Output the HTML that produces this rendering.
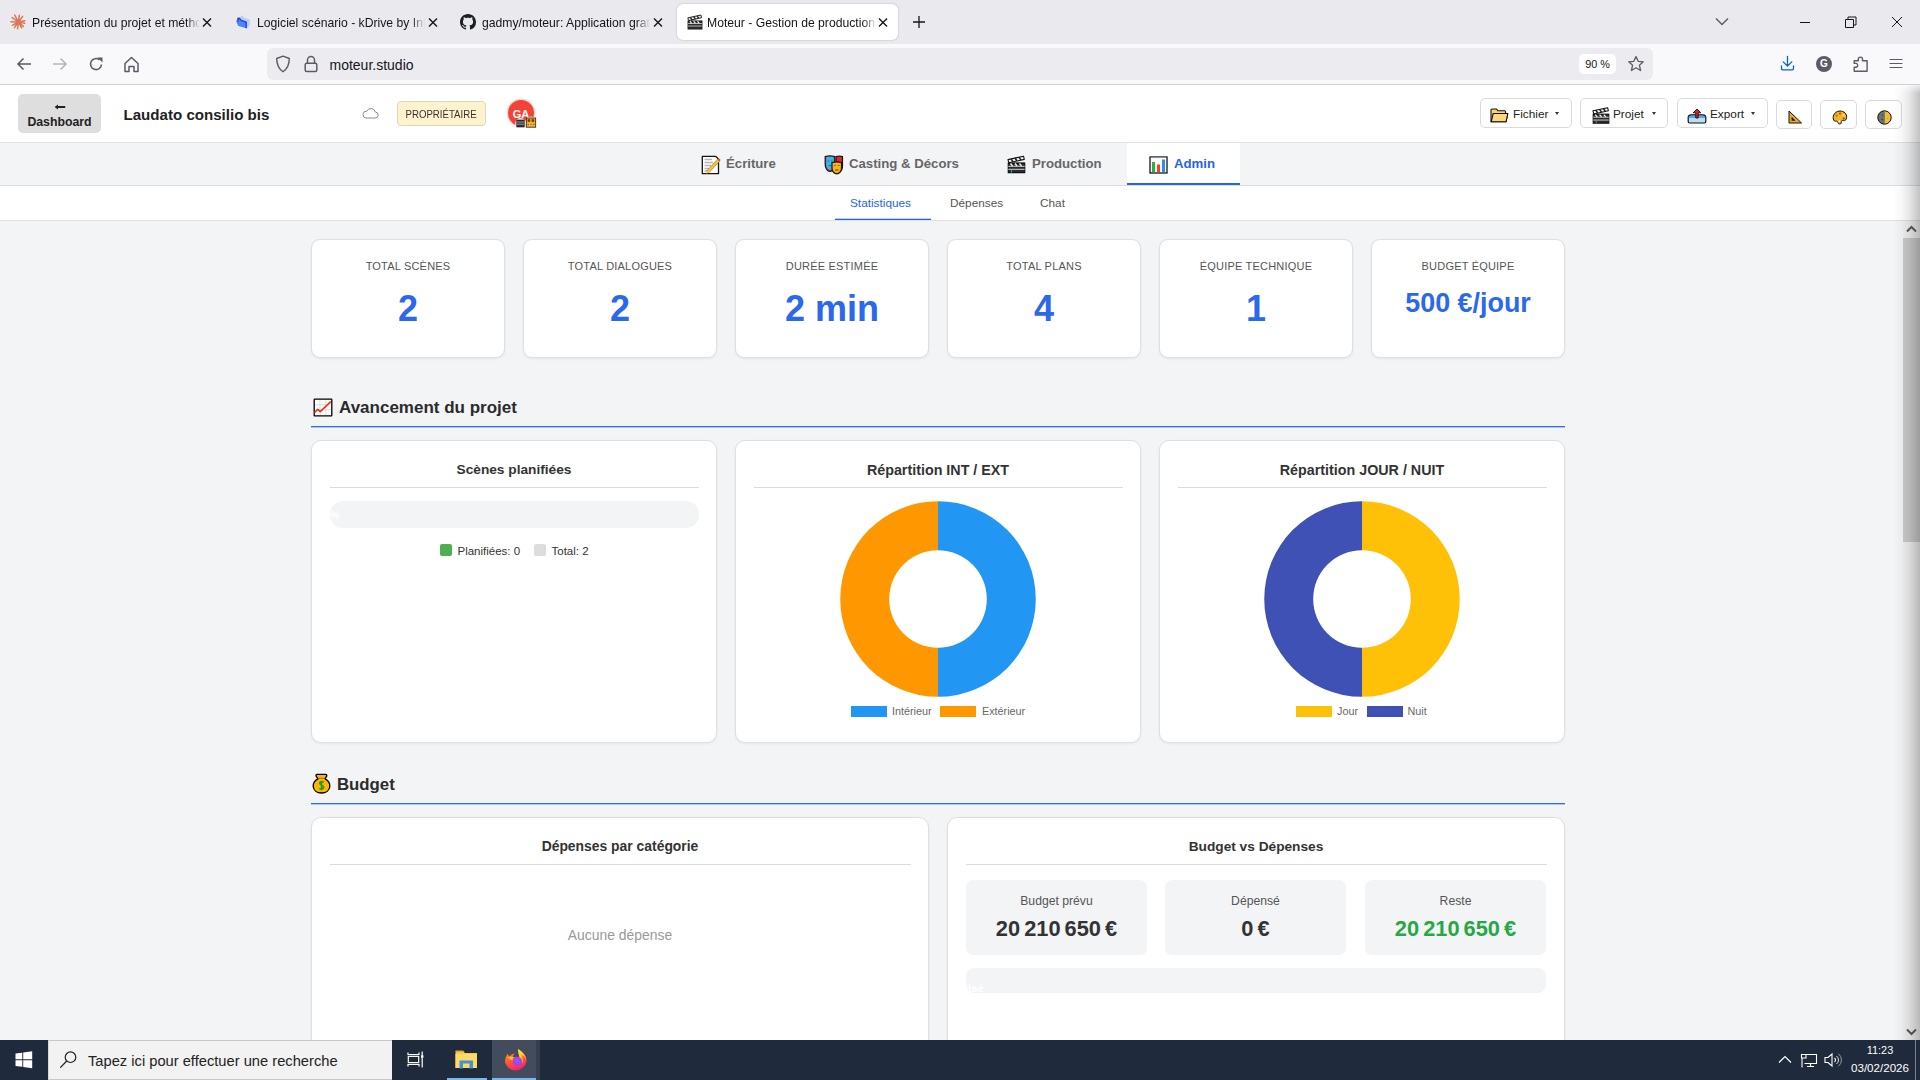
<!DOCTYPE html>
<html><head><meta charset="utf-8">
<style>
*{box-sizing:border-box}
html,body{margin:0;padding:0;width:1920px;height:1080px;overflow:hidden;position:relative;font-family:"Liberation Sans",sans-serif;background:#f3f4f6;color:#222}
.a{position:absolute}
svg{display:block}
/* browser chrome */
#tabs{left:0;top:0;width:1920px;height:44px;background:#eaeaee}
.tab{top:4px;height:36px;font-size:13px;color:#15141a;white-space:nowrap}
.tab .t{position:absolute;top:10px;overflow:hidden;}
.tabt{top:15px;height:18px;font-size:12.2px;line-height:16px;color:#15141a;white-space:nowrap;overflow:hidden;-webkit-mask-image:linear-gradient(to right,#000 calc(100% - 14px),transparent 100%)}
.fade{position:absolute;top:0;height:36px;width:14px}
#nav{left:0;top:44px;width:1920px;height:41px;background:#f9f9fb;border-bottom:1px solid #cfcfd8}
#url{left:267px;top:48px;width:1386px;height:32px;background:#ececf0;border-radius:6px}
/* page */
#hdr{left:0;top:85px;width:1920px;height:58px;background:#fff;border-bottom:1px solid #e0e0e0}
#mtabs{left:0;top:143px;width:1920px;height:43px;background:#f3f4f6;border-bottom:1px solid #dcdcdc}
#stabs{left:0;top:186px;width:1920px;height:35px;background:#fff;border-bottom:1px solid #e0e0e0}
.mt{top:0;height:42px;font-size:15px;font-weight:bold;color:#555}
.card{background:#fff;border:1px solid #dedfe1;border-radius:9px;box-shadow:0 1px 3px rgba(0,0,0,0.06)}
.lbl{font-size:11px;line-height:13px;letter-spacing:0.2px;color:#555;text-align:center;width:100%;top:20px}
.val{font-size:36px;line-height:40px;font-weight:bold;color:#2b68ee;text-align:center;width:100%;top:49px}
.sec{font-size:19px;font-weight:bold;color:#2b2b2b}
.secline{height:2px;background:linear-gradient(#2f6bed 0,#2f6bed 1px,rgba(47,107,237,0.35) 1px)}
.ctitle{font-size:13.7px;line-height:16px;font-weight:bold;color:#333;text-align:center;width:100%;top:21px}
.csep{height:1px;background:#dcdcdc;top:46px}
.btn{top:13px;height:30px;background:#fff;border:1px solid #dadada;border-radius:5px}
.btn .ico{position:absolute;top:5px;font-size:15px;line-height:18px}
.btn .bt{position:absolute;top:8px;font-size:11.8px;line-height:14px;color:#222}
.btn .car{position:absolute;top:13px;width:0;height:0;border-left:2.5px solid transparent;border-right:2.5px solid transparent;border-top:3.5px solid #333}
.btn2{top:15px;width:36px;height:29px;background:#fff;border:1px solid #dadada;border-radius:5px}
.btn2 .ico2{position:absolute;left:8px;top:6px;font-size:15px;line-height:18px}
.mti{top:12px;font-size:16px;line-height:19px}
.mtt{top:13px;font-size:13.2px;line-height:15px;font-weight:bold;color:#666}
.stt{top:9.5px;font-size:11.8px;line-height:14px;color:#555}
.card2{background:#fff;border:1px solid #dedfe1;border-radius:10px;box-shadow:0 1px 3px rgba(0,0,0,0.06)}
.lg{font-size:11.5px;line-height:13px;color:#333}
.cl{font-size:10.8px;line-height:13px;color:#666}
.bx{top:61.5px;width:181px;height:75px;background:#f3f4f6;border-radius:7px}
.bl{top:14px;width:100%;text-align:center;font-size:12.2px;line-height:14px;color:#555}
.bv{top:37px;width:100%;text-align:center;font-size:21.8px;line-height:24px;font-weight:bold;color:#333;word-spacing:-2px}
#task{left:0;top:1040px;width:1920px;height:40px;background:#1f2a3c}
</style></head><body>

<!-- TAB STRIP -->
<div id="tabs" class="a">
 <!-- tab1 -->
 <svg class="a" style="left:10px;top:14px" width="16" height="16" viewBox="0 0 16 16"><path d="M8.4 8.0L4.7 1.1M8.4 8.0L9.3 1.3M8.4 8.0L12.7 2.4M8.4 8.0L2.2 3.6M8.4 8.0L14.9 6.7M8.4 8.0L0.9 7.8M8.4 8.0L14.7 9.3M8.4 8.0L2.4 11.3M8.4 8.0L13.3 12.4M8.4 8.0L4.4 13.6M8.4 8.0L11.6 13.8M8.4 8.0L7.6 14.7" stroke="#d97757" stroke-width="1.5" stroke-linecap="round"/><circle cx="8.4" cy="8.0" r="2.2" fill="#d97757"/></svg>
 <div class="a tabt" style="left:32px;width:168px">Présentation du projet et méthodologie</div>
 <svg class="a" style="left:202px;top:18px" width="10" height="9" viewBox="0 0 10 9"><path d="M1 0.5L9 8.5M9 0.5L1 8.5" stroke="#15141a" stroke-width="1.4"/></svg>
 <!-- tab2 -->
 <svg class="a" style="left:236px;top:15px" width="15" height="14" viewBox="0 0 15 14"><path d="M4.0 2.3L6.4 0.3L8.0 2.8L13.8 4.6L13.8 10.6L10.7 13.2L4.0 11.0Z" fill="#b9cdfb"/><path d="M0.2 6.3L2.0 3.0L3.3 3.0L5.3 5.4L10.2 7.2L10.7 13.2L2.2 11.0Z" fill="#4d86f7"/><path d="M2 6.5V3.2H3.3L5.3 5.4L10.2 7.2V13.2" fill="none" stroke="#1a3cf0" stroke-width="1.3" stroke-linejoin="round"/></svg>
 <div class="a tabt" style="left:257px;width:168px">Logiciel scénario - kDrive by Infomaniak</div>
 <svg class="a" style="left:428px;top:18px" width="10" height="9" viewBox="0 0 10 9"><path d="M1 0.5L9 8.5M9 0.5L1 8.5" stroke="#15141a" stroke-width="1.4"/></svg>
 <!-- tab3 -->
 <svg class="a" style="left:460px;top:14px" width="16" height="16" viewBox="0 0 16 16"><path fill="#1b1f24" d="M8 0C3.58 0 0 3.58 0 8c0 3.54 2.29 6.53 5.47 7.59.4.07.55-.17.55-.38 0-.19-.01-.82-.01-1.49-2.01.37-2.53-.49-2.69-.94-.09-.23-.48-.94-.82-1.13-.28-.15-.68-.52-.01-.53.63-.01 1.08.58 1.23.82.72 1.21 1.87.87 2.33.66.07-.52.28-.87.51-1.07-1.780-.2-3.640-.89-3.640-3.950 0-.87.31-1.59.82-2.15-.08-.2-.36-1.02.08-2.12 0 0 .67-.21 2.2.82.64-.18 1.320-.27 2-.27.68 0 1.36.09 2 .27 1.53-1.040 2.2-.82 2.2-.82.44 1.100.16 1.920.08 2.120.51.56.82 1.270.82 2.150 0 3.07-1.870 3.750-3.650 3.950.29.25.54.73.54 1.480 0 1.070-.01 1.930-.01 2.200 0 .21.15.46.55.38A8.013 8.013 0 0016 8c0-4.42-3.58-8-8-8z"/></svg>
 <div class="a tabt" style="left:482px;width:168px">gadmy/moteur: Application gratuite</div>
 <svg class="a" style="left:653px;top:18px" width="10" height="9" viewBox="0 0 10 9"><path d="M1 0.5L9 8.5M9 0.5L1 8.5" stroke="#15141a" stroke-width="1.4"/></svg>
 <!-- tab4 active -->
 <div class="a" style="left:677px;top:4px;width:221px;height:36px;background:#fff;border-radius:6px;box-shadow:0 0 2px rgba(0,0,0,0.25)"></div>
 <svg class="a" style="left:687px;top:14px" width="16" height="16" viewBox="0 0 19 19"><path d="M1.3 8.2H17.7V17.7H1.3Z" fill="#2b2b2b" stroke="#111" stroke-width="1.2"/><path d="M1.3 11.3H17.7M1.3 14.3H17.7" stroke="#e8e8e8" stroke-width="0.9"/><path d="M1 4.6L16.5 1.2L17.3 4.4L1.8 7.8Z" fill="#f2f2f2" stroke="#111" stroke-width="1.1" stroke-linejoin="round"/><path d="M4 3.9L6 6.9M8 3L10 6M12 2.1L14 5.1" stroke="#222" stroke-width="1.6"/><path d="M3.5 8.5L5.5 11M8 8.5L10 11M12.5 8.5L14.5 11" stroke="#f2f2f2" stroke-width="1.4"/></svg>
 <div class="a tabt" style="left:707px;width:170px">Moteur - Gestion de production</div>
 <svg class="a" style="left:878px;top:18px" width="10" height="9" viewBox="0 0 10 9"><path d="M1 0.5L9 8.5M9 0.5L1 8.5" stroke="#15141a" stroke-width="1.4"/></svg>
 <!-- plus -->
 <svg class="a" style="left:912px;top:15px" width="14" height="14" viewBox="0 0 14 14"><path d="M7 1V13M1 7H13" stroke="#15141a" stroke-width="1.3"/></svg>
 <!-- right controls -->
 <svg class="a" style="left:1715px;top:17px" width="14" height="9" viewBox="0 0 14 9"><path d="M1 1.5L7 7.5L13 1.5" fill="none" stroke="#5b5b66" stroke-width="1.4"/></svg>
 <svg class="a" style="left:1799px;top:16px" width="12" height="12" viewBox="0 0 12 12"><path d="M1 6.5H11" stroke="#15141a" stroke-width="1"/></svg>
 <svg class="a" style="left:1845px;top:16px" width="12" height="12" viewBox="0 0 12 12"><path d="M0.5 3.5H8.5V11.5H0.5Z M3 3.5V1H11V9H8.5" fill="none" stroke="#15141a" stroke-width="1"/></svg>
 <svg class="a" style="left:1891px;top:16px" width="12" height="12" viewBox="0 0 12 12"><path d="M1 1L11 11M11 1L1 11" stroke="#15141a" stroke-width="1"/></svg>
</div>

<!-- NAV BAR -->
<div id="nav" class="a">
 <svg class="a" style="left:16px;top:13px" width="16" height="14" viewBox="0 0 16 14"><path d="M15 7H2M7.5 1.5L2 7L7.5 12.5" fill="none" stroke="#5b5b66" stroke-width="1.5"/></svg>
 <svg class="a" style="left:52px;top:13px" width="16" height="14" viewBox="0 0 16 14"><path d="M1 7H14M8.5 1.5L14 7L8.5 12.5" fill="none" stroke="#b4b4bb" stroke-width="1.5"/></svg>
 <svg class="a" style="left:88px;top:12px" width="16" height="16" viewBox="0 0 16 16"><path d="M13.5 8.5A5.5 5.5 0 1 1 11.5 3.8" fill="none" stroke="#5b5b66" stroke-width="1.6"/><path d="M9.5 1.5H14.5V6.5Z" fill="#5b5b66"/></svg>
 <svg class="a" style="left:123px;top:12px" width="17" height="17" viewBox="0 0 17 17"><path d="M2 7.5L8.5 1.5L15 7.5V15.5H11V10.5H6V15.5H2Z" fill="none" stroke="#5b5b66" stroke-width="1.5" stroke-linejoin="round"/></svg>
</div>
<div id="url" class="a">
 <svg class="a" style="left:8px;top:7px" width="16" height="18" viewBox="0 0 16 18"><path d="M8 1.2L14.3 3.5C14.3 10 12 14 8 16.8C4 14 1.7 10 1.7 3.5Z" fill="none" stroke="#5b5b66" stroke-width="1.4" stroke-linejoin="round"/></svg>
 <svg class="a" style="left:37px;top:7px" width="14" height="18" viewBox="0 0 14 18"><path d="M3.5 8V5A3.5 3.5 0 0 1 10.5 5V8" fill="none" stroke="#5b5b66" stroke-width="1.5"/><rect x="1.2" y="8.2" width="11.6" height="8.3" rx="1.5" fill="none" stroke="#5b5b66" stroke-width="1.5"/></svg>
 <div class="a" style="left:62.5px;top:9px;font-size:14px;line-height:16px;color:#15141a">moteur.studio</div>
 <div class="a" style="left:1312px;top:6px;width:37px;height:20px;background:#fff;border-radius:5px;font-size:10.8px;line-height:21px;text-align:center;color:#15141a">90 %</div>
 <svg class="a" style="left:1360px;top:7px" width="18" height="18" viewBox="0 0 18 18"><path d="M9 1.5L11.2 6.3L16.3 6.8L12.4 10.2L13.6 15.5L9 12.8L4.4 15.5L5.6 10.2L1.7 6.8L6.8 6.3Z" fill="none" stroke="#5b5b66" stroke-width="1.3" stroke-linejoin="round"/></svg>
</div>
 <svg class="a" style="left:1779px;top:55px" width="17" height="17" viewBox="0 0 17 17"><path d="M8.5 1.3V11M4.2 6.9L8.5 11.1L12.8 6.9M2.5 10.8V13.6A1.2 1.2 0 0 0 3.7 14.8H13.3A1.2 1.2 0 0 0 14.5 13.6V10.8" fill="none" stroke="#0061e0" stroke-width="1.3" stroke-linecap="round" stroke-linejoin="round"/></svg>
 <div class="a" style="left:1816px;top:56px;width:16px;height:16px;border-radius:50%;background:#5b5b66;color:#fff;font-size:10px;font-weight:bold;line-height:16px;text-align:center">G</div>
 <svg class="a" style="left:1853px;top:55px" width="16" height="18" viewBox="0 0 16 18"><path d="M1.2 5.7H5.3V4.2A2.1 2.1 0 0 1 9.5 4.2V5.7H14.1V16.3H1.2V12.3H3.2A2 2 0 0 0 3.2 8.4H1.2Z" fill="none" stroke="#5b5b66" stroke-width="1.4" stroke-linejoin="round"/></svg>
 <svg class="a" style="left:1889px;top:57px" width="14" height="13" viewBox="0 0 14 13"><path d="M1 2.5H13M1 6.5H13M1 10.5H13" stroke="#5b5b66" stroke-width="1.2" stroke-linecap="round"/></svg>

<!-- PAGE HEADER -->
<div id="hdr" class="a">
 <div class="a" style="left:18px;top:9px;width:83px;height:39px;background:#dedede;border-radius:5px"></div>
 <svg class="a" style="left:54px;top:19px" width="12" height="6" viewBox="0 0 12 6"><path d="M0.6 3L4 0.4V2H11.2V4H4V5.6Z" fill="#222"/></svg>
 <div class="a" style="left:18px;top:29.5px;width:83px;text-align:center;font-size:12.3px;line-height:14px;font-weight:bold;color:#222">Dashboard</div>
 <div class="a" style="left:123.5px;top:21px;font-size:15.1px;line-height:18px;font-weight:bold;color:#222">Laudato consilio bis</div>
 <svg class="a" style="left:362px;top:22px" width="17" height="12" viewBox="0 0 17 12"><path d="M4 11H13A3 3 0 0 0 13.3 5A4.5 4.5 0 0 0 4.8 4.2A3.4 3.4 0 0 0 4 11Z" fill="none" stroke="#8a8a8a" stroke-width="1"/></svg>
 <div class="a" style="left:397px;top:16px;width:89px;height:25px;background:#fff3cd;border:1px solid #ddd6bf;border-radius:4px;line-height:22px;text-align:center;color:#333"><span style="display:inline-block;font-size:10.6px;transform:scaleX(0.91);transform-origin:center">PROPRIÉTAIRE</span></div>
 <div class="a" style="left:508px;top:15px;width:26px;height:26px;border-radius:50%;background:#f44336;box-shadow:0 0 2px 1px rgba(244,67,54,0.3)"></div>
 <div class="a" style="left:508px;top:22.5px;width:26px;text-align:center;font-size:11px;line-height:13px;font-weight:bold;color:#fff">GA</div>
 <svg class="a" style="left:514px;top:30px" width="24" height="14" viewBox="0 0 24 14"><circle cx="6.5" cy="8.2" r="5.2" fill="#fff" opacity="0.9"/><rect x="2.8" y="5" width="7.4" height="7" fill="#333" stroke="#111" stroke-width="0.6"/><path d="M3 7H10M3 9.2H10" stroke="#ddd" stroke-width="0.6"/><circle cx="17" cy="7.5" r="6" fill="#fff" opacity="0.85"/><rect x="12.3" y="3" width="9.4" height="9.2" fill="#f5b21e" stroke="#222" stroke-width="0.8"/><rect x="13.6" y="4.2" width="2.6" height="2.6" fill="#6b3a10"/><rect x="17.6" y="4.2" width="2.6" height="2.6" fill="#6b3a10"/><circle cx="14.3" cy="9.4" r="0.7" fill="#e0207a"/><circle cx="17" cy="9.4" r="0.7" fill="#20a0a0"/><circle cx="19.7" cy="9.4" r="0.7" fill="#e0207a"/></svg>
 

 <div class="a btn" style="left:1480px;width:92px"><svg class="a" style="left:9px;top:9px" width="19" height="15" viewBox="0 0 19 15"><path d="M1 2.2Q1 1 2.2 1H6.5L8 2.8H14.5Q15.6 2.8 15.6 4V5.5H17.8L16 13.8H1Z" fill="#fcd06a" stroke="#111" stroke-width="1.1" stroke-linejoin="round"/><path d="M3.2 5.5H17.8L16 13.8H1.2Z" fill="#fdd77e" stroke="#111" stroke-width="1.1" stroke-linejoin="round"/></svg><span class="bt" style="left:32px">Fichier</span><span class="car" style="left:74px"></span></div>
 <div class="a btn" style="left:1580px;width:88px"><svg class="a" style="left:10.5px;top:6.5px" width="18" height="19" viewBox="0 0 19 19"><path d="M1.3 8.2H17.7V17.7H1.3Z" fill="#2b2b2b" stroke="#111" stroke-width="1.2"/><path d="M1.3 11.3H17.7M1.3 14.3H17.7" stroke="#e8e8e8" stroke-width="0.9"/><path d="M4.5 14.3V17.7" stroke="#48a0e0" stroke-width="0.9"/><path d="M1 4.6L16.5 1.2L17.3 4.4L1.8 7.8Z" fill="#f2f2f2" stroke="#111" stroke-width="1.1" stroke-linejoin="round"/><path d="M4 3.9L6 6.9M8 3L10 6M12 2.1L14 5.1" stroke="#222" stroke-width="1.6"/><path d="M1.5 8.2H17.5" stroke="#111" stroke-width="0.8"/><path d="M3.5 8.5L5.5 11M8 8.5L10 11M12.5 8.5L14.5 11" stroke="#f2f2f2" stroke-width="1.4"/></svg><span class="bt" style="left:32px">Projet</span><span class="car" style="left:71px"></span></div>
 <div class="a btn" style="left:1677px;width:91px"><svg class="a" style="left:8.5px;top:9px" width="20" height="16" viewBox="0 0 20 16"><path d="M1.2 9.2Q1.5 7 4 6.8H16Q18.5 7 18.8 9.2V13.5Q18.8 15 17.3 15H2.7Q1.2 15 1.2 13.5Z" fill="#b9def5" stroke="#111" stroke-width="1.2"/><path d="M1.8 9H18.2" stroke="#3b9be6" stroke-width="1.6"/><path d="M10 1L6.2 4.8H8.8V10H11.2V4.8H13.8Z" fill="#e8192c" stroke="#111" stroke-width="0.9" stroke-linejoin="round"/></svg><span class="bt" style="left:32px">Export</span><span class="car" style="left:73px"></span></div>
 <div class="a btn2" style="left:1776px"><svg class="a" style="left:10.5px;top:9px" width="15" height="14" viewBox="0 0 15 14"><path d="M1 1V13H13.5Z" fill="#f7a81b" stroke="#111" stroke-width="1" stroke-linejoin="round"/><path d="M3.6 6.8V10.8H7.6Z" fill="#111"/><path d="M1.6 2V12.4" stroke="#3a7d3a" stroke-width="0.6"/></svg></div>
 <div class="a btn2" style="left:1820px;width:37px"><svg class="a" style="left:10.5px;top:8.5px" width="16" height="15" viewBox="0 0 16 15"><path d="M8 1C12 1 15 3.8 14.6 7.5C14.3 10 13 11 11.5 10.6C10 10.2 9.2 10.8 9.3 12.3C9.4 13.8 8 14.5 6.8 13.8C5.8 13.2 6.2 11.8 5 11.2C4 10.7 3.3 11.8 2.4 11C1.2 10 1 8 1.3 6.3C1.9 3.2 4.6 1 8 1Z" fill="#f9b21b" stroke="#111" stroke-width="1"/><circle cx="4.6" cy="5.6" r="1.1" fill="#21b33b"/><circle cx="8" cy="3.6" r="1.1" fill="#e8293a"/><circle cx="11.6" cy="5.2" r="1.1" fill="#ffe84d"/><circle cx="11.8" cy="8.6" r="1.1" fill="#2c5de5"/><circle cx="7.3" cy="11.2" r="1" fill="#fff"/></svg></div>
 <div class="a btn2" style="left:1865px;width:37px"><svg class="a" style="left:10.5px;top:8.5px" width="15" height="15" viewBox="0 0 15 15"><path d="M7.5 0.8A6.7 6.7 0 0 0 7.5 14.2Z" fill="#707070"/><path d="M7.5 0.8A6.7 6.7 0 0 1 7.5 14.2Z" fill="#f7b93a"/><circle cx="7.5" cy="7.5" r="6.7" fill="none" stroke="#111" stroke-width="1"/><path d="M7.5 1V14" stroke="#3b8a3b" stroke-width="0.8"/><circle cx="5.6" cy="5" r="0.8" fill="#444"/><circle cx="5.2" cy="9.6" r="0.9" fill="#444"/><circle cx="10.5" cy="8.2" r="0.7" fill="#e09a20"/></svg></div>
</div>

<div id="mtabs" class="a">
 <svg class="a" style="left:700.5px;top:11.5px" width="20" height="20" viewBox="0 0 20 20"><path d="M1.3 1.3H14.5L17.5 4V18.7H1.3Z" fill="#fff" stroke="#151515" stroke-width="1.3" stroke-linejoin="round"/><path d="M3.5 4.5H11M3.5 7.5H12M3.5 10.5H10M3.5 13.5H8M3.5 16H7" stroke="#b5b5b5" stroke-width="1.3"/><path d="M5.5 16.2L16.5 4.2L18.8 6.3L7.8 17.8L5 18.5Z" fill="#f7c244"/><path d="M16.3 4.4L17.6 3L19.6 5L18.4 6.3Z" fill="#e0463b"/><path d="M5.5 16.2L16.5 4.2M7.8 17.8L18.6 6.2" stroke="#7a5a10" stroke-width="0.5"/></svg><div class="a mtt" style="left:726px">Écriture</div>
 <svg class="a" style="left:823.5px;top:11.5px" width="20" height="20" viewBox="0 0 20 20"><path d="M12 1.5C14 1 17 1 18.5 1.5V11C18.5 14 17 16 15.5 16.5L12 14Z" fill="#e3232e" stroke="#151515" stroke-width="1.2"/><path d="M1.2 1.5C4 0.7 8 0.7 10.8 1.5V9.5C10.8 13.5 8.5 16.5 6 16.5C3.5 16.5 1.2 13.5 1.2 9.5Z" fill="#e3232e" stroke="#151515" stroke-width="1.2"/><path d="M2.2 2.3C4.5 1.7 7.5 1.7 9.8 2.3V9.5C9.8 12.5 8 14.8 6 14.8C4 14.8 2.2 12.5 2.2 9.5Z" fill="#35b6f0"/><path d="M3.5 6H5.2M6.8 6H8.5M4.5 11C5.5 10.3 6.5 10.3 7.5 11" stroke="#1a6aa0" stroke-width="0.9"/><path d="M8 7.5C10.5 6.8 15 6.8 17.5 7.5V13.5C17.5 16.5 15 18.8 12.8 18.8C10.5 18.8 8 16.5 8 13.5Z" fill="#f9b21b" stroke="#151515" stroke-width="1.2"/><path d="M10 10.5H11.8M13.8 10.5H15.6M11 15.2C12.2 14.5 13.4 14.5 14.6 15.2" stroke="#8a5a00" stroke-width="0.9"/></svg><div class="a mtt" style="left:849px">Casting &amp; Décors</div>
 <svg class="a" style="left:1006.5px;top:12px" width="19" height="19" viewBox="0 0 19 19"><path d="M1.3 8.2H17.7V17.7H1.3Z" fill="#2b2b2b" stroke="#111" stroke-width="1.2"/><path d="M1.3 11.3H17.7M1.3 14.3H17.7" stroke="#e8e8e8" stroke-width="0.9"/><path d="M4.5 14.3V17.7" stroke="#48a0e0" stroke-width="0.9"/><path d="M1 4.6L16.5 1.2L17.3 4.4L1.8 7.8Z" fill="#f2f2f2" stroke="#111" stroke-width="1.1" stroke-linejoin="round"/><path d="M4 3.9L6 6.9M8 3L10 6M12 2.1L14 5.1" stroke="#222" stroke-width="1.6"/><path d="M1.5 8.2H17.5" stroke="#111" stroke-width="0.8"/><path d="M3.5 8.5L5.5 11M8 8.5L10 11M12.5 8.5L14.5 11" stroke="#f2f2f2" stroke-width="1.4"/></svg><div class="a mtt" style="left:1032px">Production</div>
 <div class="a" style="left:1127px;top:0;width:113px;height:42px;background:#fff;border-bottom:2px solid #2563eb"></div>
 <svg class="a" style="left:1148.5px;top:12.5px" width="19" height="18" viewBox="0 0 19 18"><rect x="1" y="1" width="17" height="16" fill="#fff" stroke="#151515" stroke-width="1.3"/><path d="M1.8 1.8H17.2" stroke="#ddd" stroke-width="0.5"/><rect x="3" y="6" width="3" height="10" fill="#22b53a"/><rect x="8" y="8.5" width="3" height="7.5" fill="#f2402a"/><rect x="13" y="3.5" width="3" height="12.5" fill="#2b8ef0"/></svg><div class="a mtt" style="left:1174px;color:#2563eb">Admin</div>
</div>
<div id="stabs" class="a">
 <div class="a stt" style="left:850px;color:#2563eb">Statistiques</div>
 <div class="a" style="left:835px;top:32px;width:96px;height:2px;background:linear-gradient(rgba(37,99,235,0.3) 0 1px,#2563eb 1px)"></div>
 <div class="a stt" style="left:950px">Dépenses</div>
 <div class="a stt" style="left:1040px">Chat</div>
</div>

<div class="a card" style="left:311px;top:239px;width:194px;height:119px"><div class="a lbl">TOTAL SCÈNES</div><div class="a val">2</div></div>
<div class="a card" style="left:523px;top:239px;width:194px;height:119px"><div class="a lbl">TOTAL DIALOGUES</div><div class="a val">2</div></div>
<div class="a card" style="left:735px;top:239px;width:194px;height:119px"><div class="a lbl">DURÉE ESTIMÉE</div><div class="a val">2 min</div></div>
<div class="a card" style="left:947px;top:239px;width:194px;height:119px"><div class="a lbl">TOTAL PLANS</div><div class="a val">4</div></div>
<div class="a card" style="left:1159px;top:239px;width:194px;height:119px"><div class="a lbl">ÉQUIPE TECHNIQUE</div><div class="a val">1</div></div>
<div class="a card" style="left:1371px;top:239px;width:194px;height:119px"><div class="a lbl">BUDGET ÉQUIPE</div><div class="a val" style="font-size:26.9px;top:43px">500 €/jour</div></div>
<!-- Avancement -->
<svg class="a" style="left:312.5px;top:397.5px" width="20" height="19" viewBox="0 0 20 19"><rect x="1.2" y="1.1" width="17.6" height="16.8" rx="0.6" fill="#fff" stroke="#000" stroke-width="1.3"/><path d="M2 6.8H18M2 11.8H18M7 2V17M12.8 2V17" stroke="#d4d4d4" stroke-width="0.8"/><path d="M1.3 14.8L4.8 11.4L7.2 13.6L17.8 3.6" fill="none" stroke="#f02a0c" stroke-width="1.5" stroke-linejoin="round"/></svg>
<div class="a sec" style="left:339px;top:398px;font-size:17px;line-height:20px">Avancement du projet</div>
<div class="a secline" style="left:311px;top:426px;width:1254px"></div>

<div class="a card2" style="left:311px;top:440px;width:406px;height:303px">
 <div class="a ctitle">Scènes planifiées</div><div class="a csep" style="left:18px;width:369px"></div>
 <div class="a" style="left:18px;top:60px;width:369px;height:27px;background:#f3f4f6;border-radius:13px;overflow:hidden"><div class="a" style="left:-30px;top:8px;width:40px;text-align:right;font-size:11.5px;line-height:13px;font-weight:bold;color:#fff">0%</div></div>
 <div class="a" style="left:127.5px;top:102.5px;width:12.5px;height:12.5px;background:#4caf50;border-radius:2px"></div>
 <div class="a lg" style="left:145.5px;top:103.5px">Planifiées: 0</div>
 <div class="a" style="left:221.5px;top:102.5px;width:12.5px;height:12.5px;background:#dddddd;border-radius:2px"></div>
 <div class="a lg" style="left:239.5px;top:103.5px">Total: 2</div>
</div>

<div class="a card2" style="left:735px;top:440px;width:406px;height:303px">
 <div class="a ctitle" style="font-size:14.3px">Répartition INT / EXT</div><div class="a csep" style="left:18px;width:369px"></div>
 <svg class="a" style="left:103.6px;top:59.5px" width="196" height="196" viewBox="0 0 196 196"><path d="M98 0.2A97.8 97.8 0 0 1 98 195.8V146.8A48.8 48.8 0 0 0 98 49.2Z" fill="#2196f3"/><path d="M98 0.2A97.8 97.8 0 0 0 98 195.8V146.8A48.8 48.8 0 0 1 98 49.2Z" fill="#ff9800"/></svg>
 <div class="a" style="left:114.5px;top:264.5px;width:36px;height:11.5px;background:#2196f3"></div>
 <div class="a cl" style="left:156px;top:263.5px">Intérieur</div>
 <div class="a" style="left:204px;top:264.5px;width:36px;height:11.5px;background:#ff9800"></div>
 <div class="a cl" style="left:246px;top:263.5px">Extérieur</div>
</div>

<div class="a card2" style="left:1159px;top:440px;width:406px;height:303px">
 <div class="a ctitle" style="font-size:14.3px">Répartition JOUR / NUIT</div><div class="a csep" style="left:18px;width:369px"></div>
 <svg class="a" style="left:103.6px;top:59.5px" width="196" height="196" viewBox="0 0 196 196"><path d="M98 0.2A97.8 97.8 0 0 1 98 195.8V146.8A48.8 48.8 0 0 0 98 49.2Z" fill="#ffc107"/><path d="M98 0.2A97.8 97.8 0 0 0 98 195.8V146.8A48.8 48.8 0 0 1 98 49.2Z" fill="#3f51b5"/></svg>
 <div class="a" style="left:135.5px;top:264.5px;width:36px;height:11.5px;background:#ffc107"></div>
 <div class="a cl" style="left:177px;top:263.5px">Jour</div>
 <div class="a" style="left:206.5px;top:264.5px;width:36px;height:11.5px;background:#3f51b5"></div>
 <div class="a cl" style="left:247.5px;top:263.5px">Nuit</div>
</div>

<!-- Budget -->
<svg class="a" style="left:312px;top:773px" width="19" height="21" viewBox="0 0 19 21"><path d="M5 1.3H13.6C15 1.3 15.2 3 14.2 3.8L13 5.8C16.5 7.5 18 10.5 17.8 13.5C17.5 17.5 14 20 9.5 20C5 20 1.5 17.5 1.2 13.5C1 10.5 2.5 7.5 6 5.8L4.6 3.8C3.5 3 4 1.3 5 1.3Z" fill="#ffb400" stroke="#000" stroke-width="1.3" stroke-linejoin="round"/><path d="M5.8 5.3H13.2" stroke="#8a5a2a" stroke-width="0.8"/><path d="M11.8 9.3C11 8.5 8 8.3 7.6 10C7.2 12 11.6 12 11.6 14.3C11.6 16.3 8.4 16.5 7.3 15.5M9.5 7.8V17.3" fill="none" stroke="#14a01e" stroke-width="1.6"/></svg>
<div class="a sec" style="left:337px;top:775px;font-size:16.8px;line-height:20px">Budget</div>
<div class="a secline" style="left:311px;top:803px;width:1254px"></div>

<div class="a card2" style="left:311px;top:817px;width:618px;height:300px">
 <div class="a ctitle" style="font-size:13.9px;top:20px">Dépenses par catégorie</div><div class="a csep" style="left:18px;width:581px"></div>
 <div class="a" style="left:0;top:108.5px;width:100%;text-align:center;font-size:13.9px;line-height:16px;color:#999">Aucune dépense</div>
</div>

<div class="a card2" style="left:947px;top:817px;width:618px;height:300px">
 <div class="a ctitle">Budget vs Dépenses</div><div class="a csep" style="left:18px;width:581px"></div>
 <div class="a bx" style="left:18px"><div class="a bl">Budget prévu</div><div class="a bv">20 210 650 €</div></div>
 <div class="a bx" style="left:217px"><div class="a bl">Dépensé</div><div class="a bv">0 €</div></div>
 <div class="a bx" style="left:417px"><div class="a bl">Reste</div><div class="a bv" style="color:#28a745">20 210 650 €</div></div>
 <div class="a" style="left:18px;top:150px;width:580px;height:25px;background:#f3f4f6;border-radius:8px;overflow:hidden"><div class="a" style="left:-42px;top:14px;width:60px;text-align:right;font-size:11.5px;line-height:13px;font-weight:bold;color:#fff">Utilisé</div></div>
</div>

<!-- scrollbar + right shadow -->
<div class="a" style="left:1903px;top:221px;width:17px;height:819px;background:#f3f3f3"></div>
<div class="a" style="left:1903px;top:238px;width:17px;height:304px;background:#cdcdcd"></div>
<div class="a" style="left:1894px;top:85px;width:26px;height:955px;background:linear-gradient(to right,rgba(0,0,0,0) 0%,rgba(0,0,0,0.03) 30%,rgba(0,0,0,0.1) 60%,rgba(0,0,0,0.24) 100%);-webkit-mask-image:linear-gradient(to bottom,rgba(0,0,0,0.3) 0,#000 8px)"></div>
<svg class="a" style="left:1906px;top:225px" width="11" height="8" viewBox="0 0 11 8"><path d="M1 6.5L5.5 2L10 6.5" fill="none" stroke="#505050" stroke-width="2"/></svg>
<svg class="a" style="left:1906px;top:1028px" width="11" height="8" viewBox="0 0 11 8"><path d="M1 1.5L5.5 6L10 1.5" fill="none" stroke="#505050" stroke-width="2"/></svg>

<!-- TASKBAR -->
<div id="task" class="a">
 <svg class="a" style="left:15px;top:11px" width="18" height="18" viewBox="0 0 18 18"><path d="M0.5 2.6L7.3 1.7V8.3H0.5Z M8.2 1.55L17.2 0.3V8.3H8.2Z M0.5 9.2H7.3V15.8L0.5 14.9Z M8.2 9.2H17.2V17.2L8.2 15.95Z" fill="#fff"/></svg>
 <div class="a" style="left:48px;top:0;width:344px;height:40px;background:#f2f2f2;border-top:1px solid #c8c8c8;border-left:1px solid #d8d8d8;border-bottom:1px solid #c8c8c8"></div>
 <svg class="a" style="left:59px;top:10px" width="19" height="19" viewBox="0 0 19 19"><circle cx="11.5" cy="7.2" r="5.3" fill="none" stroke="#222" stroke-width="1.2"/><path d="M7.7 11L1.3 17.6" stroke="#222" stroke-width="1.3"/></svg>
 <div class="a" style="left:88px;top:13px;font-size:14.7px;line-height:17px;color:#222;white-space:nowrap">Tapez ici pour effectuer une recherche</div>
 <svg class="a" style="left:407px;top:11px" width="18" height="17" viewBox="0 0 18 17"><path d="M1 1.5V3.5H12V1.5 M1 15.5V13.5H12V15.5 M1.3 5.3H11.7V11.7H1.3Z M15.2 0.5V16.5" fill="none" stroke="#fff" stroke-width="1.2"/><rect x="14" y="4.3" width="2.4" height="2.4" fill="#fff"/></svg>
 <!-- explorer -->
 <svg class="a" style="left:455px;top:10px" width="23" height="20" viewBox="0 0 23 20"><path d="M0.5 1.5H8.5L10 3H22V18H0.5Z" fill="#f7c948"/><path d="M0.5 0.5H8L9.5 2H0.5Z" fill="#e8a33a"/><path d="M0.5 4H22V18H0.5Z" fill="#ffd966"/><path d="M4.5 10.5H18V18.5H14.5V13.5H8V18.5H4.5Z" fill="#3f94d9"/></svg>
 <div class="a" style="left:447px;top:38px;width:40px;height:2px;background:#76b9ed"></div>
 <!-- firefox -->
 <div class="a" style="left:492px;top:0;width:44px;height:40px;background:#434c5c"></div>
 <div class="a" style="left:536px;top:0;width:4px;height:40px;background:#363f4f"></div>
 <div class="a" style="left:492px;top:38px;width:44px;height:2px;background:#76b9ed"></div>
 <svg class="a" style="left:504px;top:9px" width="24" height="24" viewBox="0 0 24 24"><defs><linearGradient id="ffg" x1="0.2" y1="0" x2="0.6" y2="1"><stop offset="0" stop-color="#ff980e"/><stop offset="0.55" stop-color="#ff563b"/><stop offset="1" stop-color="#f0216a"/></linearGradient><linearGradient id="ffy" x1="0" y1="0" x2="0.3" y2="1"><stop offset="0" stop-color="#fff44f"/><stop offset="1" stop-color="#ff9a1f"/></linearGradient><radialGradient id="ffp" cx="0.45" cy="0.4" r="0.6"><stop offset="0" stop-color="#9059ff"/><stop offset="1" stop-color="#b833e1"/></radialGradient></defs>
<path d="M14 0C16.5 2 22.5 5 22.5 12.5A11 11 0 0 1 1 13C1 9 2.5 6 4 4.5C4 6 4.8 7 5.8 7.5C7 5.5 9 4.5 11 4.6C9 6 8.5 8.5 9 10C10 7.5 13.5 7 15.5 8.5C14.5 5.5 14.5 2.5 14 0Z" fill="url(#ffg)"/>
<path d="M14 0C16.5 2 22.5 5 22.5 12.5C22 9.5 20 6.8 17.5 6C19 9 19.5 12 18.5 14.5C17.5 11 16 9.5 15.5 8.5C14.5 5.5 14.5 2.5 14 0Z" fill="url(#ffy)"/>
<circle cx="13.3" cy="12.6" r="4.6" fill="url(#ffp)"/>
<path d="M3.5 8.5C5.5 7.2 8.5 7 10.5 8.3C9 9 8.3 10.2 8.5 11.5C7 10.5 5 10 3.5 8.5Z" fill="#ffb936"/>
</svg>
 <!-- tray -->
 <svg class="a" style="left:1778px;top:15px" width="14" height="9" viewBox="0 0 14 9"><path d="M1 7.5L7 1.5L13 7.5" fill="none" stroke="#fff" stroke-width="1.2"/></svg>
 <svg class="a" style="left:1800px;top:13px" width="18" height="15" viewBox="0 0 18 15"><path d="M4.5 1.5H16.5V10.5H4.5 M10.5 10.5V13 M7 13.5H14 M1.5 1.5H6V5H1.5Z M2 5V14.5" fill="none" stroke="#fff" stroke-width="1.1"/></svg>
 <svg class="a" style="left:1824px;top:12px" width="18" height="16" viewBox="0 0 18 16"><path d="M1 5.5H4L8 2V14L4 10.5H1Z" fill="none" stroke="#fff" stroke-width="1.1"/><path d="M10.5 6A2.5 2.5 0 0 1 10.5 10" fill="none" stroke="#fff" stroke-width="1.1"/><path d="M12.5 4A5 5 0 0 1 12.5 12" fill="none" stroke="#ddd" stroke-width="1"/><path d="M14.5 1.8A8 8 0 0 1 14.5 14.2" fill="none" stroke="#999" stroke-width="1"/></svg>
 <div class="a" style="left:1866px;top:3px;width:28px;font-size:10.9px;line-height:14px;color:#fff;text-align:center">11:23</div>
 <div class="a" style="left:1850px;top:21px;width:60px;font-size:11.6px;line-height:14px;color:#fff;text-align:center">03/02/2026</div>
 <div class="a" style="left:1915px;top:0;width:1px;height:40px;background:#7a8290"></div>
</div>
</body></html>
